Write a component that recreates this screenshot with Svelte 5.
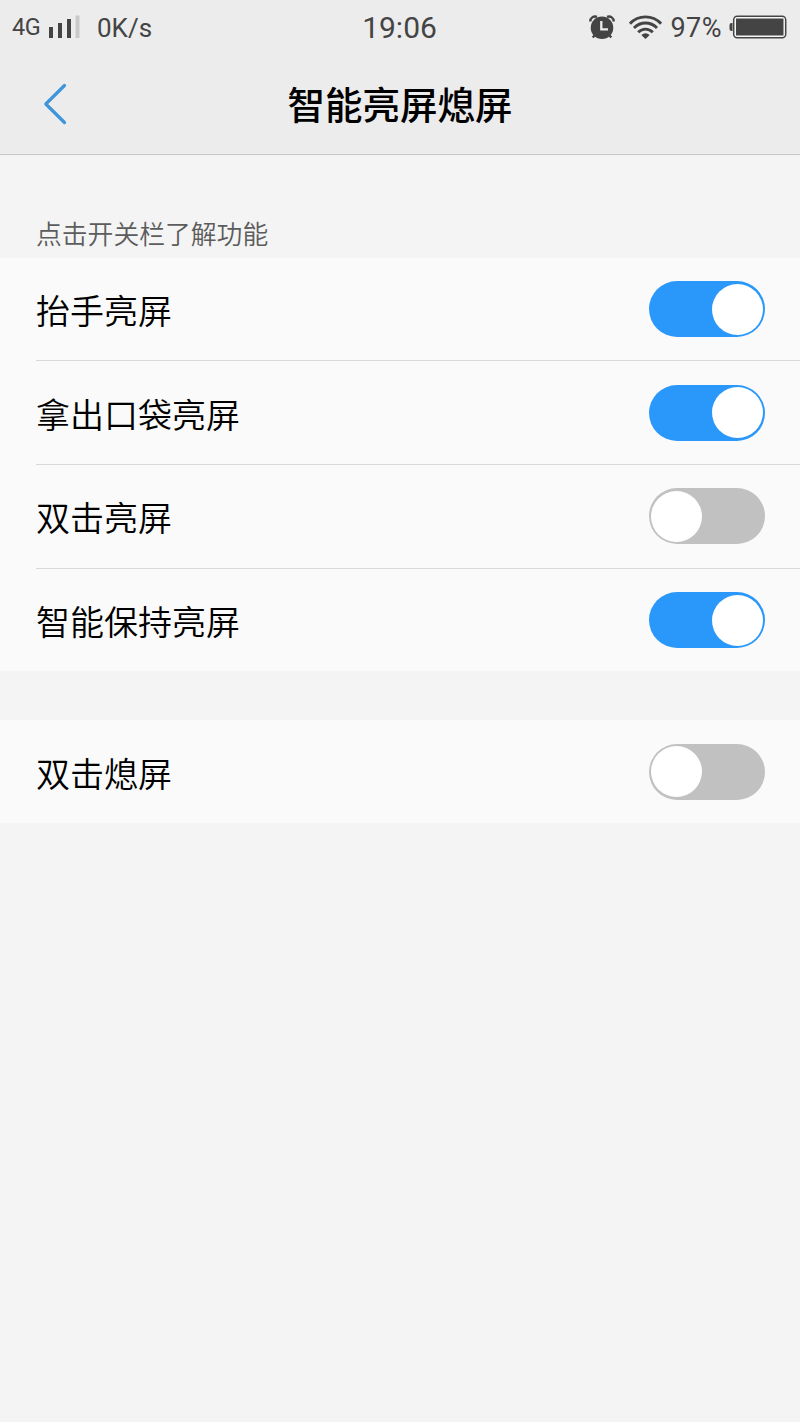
<script>
  let groups = $state([
    [
      { label: "抬手亮屏", on: true },
      { label: "拿出口袋亮屏", on: true },
      { label: "双击亮屏", on: false },
      { label: "智能保持亮屏", on: true }
    ],
    [{ label: "双击熄屏", on: false }]
  ]);

  function toggle(item) {
    item.on = !item.on;
  }
</script>

<div class="screen">
  <header>
    <div class="status">
      <div class="left">
        <span class="network">4G</span>
        <svg class="signal" width="31" height="24" viewBox="0 0 31 24">
          <rect x="0" y="12" width="4" height="11" fill="#444" />
          <rect x="9" y="8" width="4" height="15" fill="#444" />
          <rect x="18" y="4" width="4" height="19" fill="#444" />
          <rect x="26.500" y="0.500" width="4" height="22.500" fill="#c9c9c9" />
        </svg>
        <span class="speed">0K/s</span>
      </div>
      <span class="time">19:06</span>
      <div class="right">
        <svg class="alarm" width="26" height="25" viewBox="0 0 26 25">
          <path d="M1.300 6.500C1.200 3 4.500 0.500 8 1.900M24.700 6.500C24.800 3 21.500 0.500 18 1.900" fill="none" stroke="#444" stroke-width="2.400" />
          <path d="M5.500 20.500L3.700 22.500M20.500 20.500L22.300 22.500" stroke="#444" stroke-width="2.400" />
          <circle cx="13" cy="12.800" r="11.300" fill="#444" />
          <path d="M12.300 6V14.300H19" fill="none" stroke="#ececec" stroke-width="2.300" />
        </svg>
        <svg class="wifi" width="33" height="24" viewBox="0 0 33 24">
          <g fill="none" stroke="#444" stroke-width="2.900">
            <path d="M0.900 8.700C9.500 -0.400 23.500 -0.400 32.100 8.700" />
            <path d="M5 13C11.500 6.300 21.500 6.300 28 13" />
            <path d="M9.200 17.300C13.500 13.100 19.500 13.100 23.800 17.300" />
          </g>
          <path d="M12.300 20Q16.500 16.700 20.700 20L16.500 24Z" fill="#444" />
        </svg>
        <span class="percent">97%</span>
        <svg class="battery" width="58" height="24" viewBox="0 0 58 24">
          <path d="M3.500 8H2.500Q0.500 8 0.500 10V14Q0.500 16 2.500 16H3.500Z" fill="#444" />
          <rect x="4.700" y="1.200" width="52" height="21.600" rx="3.500" fill="#f7f7f7" stroke="#444" stroke-width="1.500" />
          <rect x="7" y="3.600" width="47.500" height="16.800" rx="0.500" fill="#444" />
        </svg>
      </div>
    </div>
    <div class="bar">
      <button class="back" aria-label="返回">
        <svg width="24" height="42" viewBox="0 0 24 42">
          <path d="M21.500 2.500L2.800 21L21.500 39.500" fill="none" stroke="#3d95dc" stroke-width="3.200" stroke-linecap="round" stroke-linejoin="round" />
        </svg>
      </button>
      <h1>智能亮屏熄屏</h1>
    </div>
  </header>

  <p class="hint">点击开关栏了解功能</p>

  {#each groups as group}
    <ul>
      {#each group as item}
        <li>
          <span class="label">{item.label}</span>
          <button
            class="switch"
            class:on={item.on}
            role="switch"
            aria-checked={item.on}
            aria-label={item.label}
            onclick={() => toggle(item)}>
            <span class="knob"></span>
          </button>
        </li>
      {/each}
    </ul>
  {/each}
</div>

<style>
  :global(body) {
    background: #f4f4f4;
  }
  .screen {
    min-height: 1422px;
    background: #f4f4f4;
    color: #000;
    font-family: "Noto Sans CJK SC", sans-serif;
  }
  header {
    box-sizing: border-box;
    height: 155px;
    background: #ececec;
    border-bottom: 1px solid #c8c8c8;
  }
  button {
    border: 0;
    padding: 0;
    background: none;
  }
  .status {
    display: grid;
    grid-template-columns: 1fr auto 1fr;
    align-items: center;
    height: 54px;
    padding: 0 13px 0 12px;
    color: #444;
    font-family: Roboto, sans-serif;
    white-space: nowrap;
  }
  .left,
  .right {
    display: flex;
    align-items: center;
  }
  .right {
    justify-content: flex-end;
  }
  .network {
    width: 37px;
    font-size: 23.500px;
    letter-spacing: -0.500px;
  }
  .speed {
    margin-left: 17px;
    font-size: 26px;
    padding-top: 2px;
  }
  .time {
    padding-top: 1px;
    font-size: 30px;
  }
  .wifi {
    margin-left: 14px;
  }
  .percent {
    margin: 2px 7px 0 8px;
    font-size: 27px;
    letter-spacing: 0.500px;
  }
  .bar {
    display: grid;
    grid-template-columns: 120px 1fr 120px;
    align-items: center;
    height: 100px;
  }
  .back {
    display: flex;
    padding-left: 43px;
  }
  h1 {
    margin: 0 0 3px;
    text-align: center;
    font-size: 37.500px;
    font-weight: 500;
    line-height: 54px;
  }
  .hint {
    margin: 0;
    height: 103px;
    box-sizing: border-box;
    padding: 59px 36px 0;
    color: #5c5c5c;
    font-size: 25.800px;
    font-weight: 350;
    line-height: 38px;
  }
  ul {
    margin: 0 0 49px;
    padding: 0 0 0 36px;
    list-style: none;
    background: #fafafa;
  }
  li {
    display: flex;
    align-items: center;
    justify-content: space-between;
    height: 102.700px;
    padding-right: 35.500px;
  }
  li:first-child {
    height: 102.300px;
  }
  li + li {
    border-top: 1px solid #d9d9d9;
  }
  .label {
    padding-top: 2px;
    font-size: 34px;
    font-weight: 350;
    line-height: 50px;
  }
  .switch {
    display: flex;
    align-items: center;
    box-sizing: border-box;
    width: 115.500px;
    height: 56px;
    padding: 0 2px;
    border-radius: 28px;
    background: #c1c1c1;
  }
  .switch.on {
    justify-content: flex-end;
    background: #2a98fa;
  }
  .knob {
    width: 51px;
    height: 51px;
    border-radius: 50%;
    background: #fff;
  }
</style>
